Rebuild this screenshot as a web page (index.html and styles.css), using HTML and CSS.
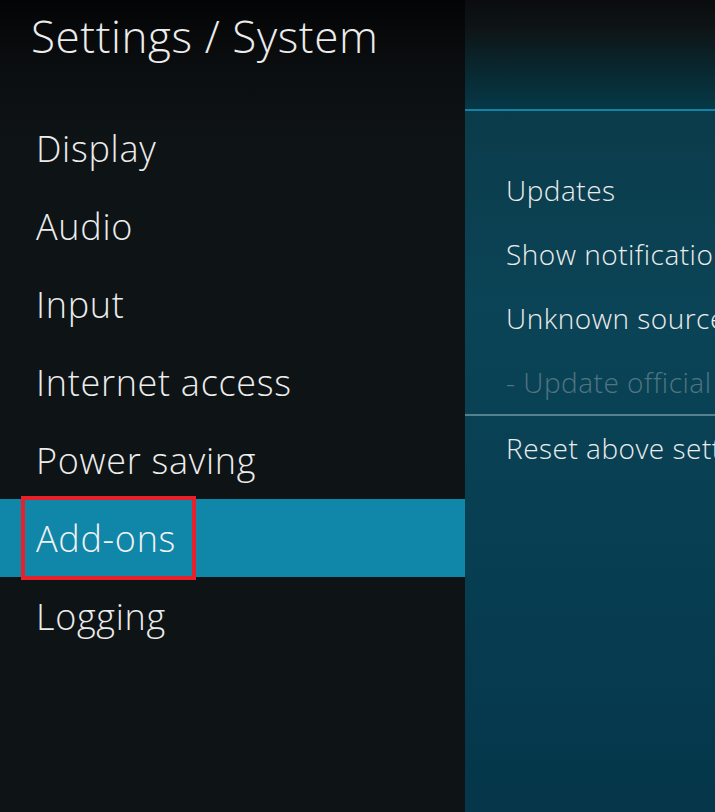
FILE: index.html
```html
<!DOCTYPE html>
<html>
<head>
<meta charset="utf-8">
<link rel="stylesheet" href="styles.css">
</head>
<body>
<div class="screen">
  <aside class="sidebar">
    <header class="title-bar"><h1 class="title">Settings / System</h1></header>
    <nav class="nav">
      <div class="nav-item">Display</div>
      <div class="nav-item">Audio</div>
      <div class="nav-item">Input</div>
      <div class="nav-item">Internet access</div>
      <div class="nav-item">Power saving</div>
      <div class="nav-item active">Add-ons<span class="mark"></span></div>
      <div class="nav-item">Logging</div>
    </nav>
  </aside>
  <main class="content">
    <div class="content-top"></div>
    <div class="content-rule"></div>
    <div class="settings">
      <div class="setting">Updates</div>
      <div class="setting">Show notifications</div>
      <div class="setting">Unknown sources</div>
      <div class="setting disabled">- Update official add-ons from</div>
      <div class="setting-sep"></div>
      <div class="setting">Reset above settings to default</div>
    </div>
  </main>
</div>
</body>
</html>
```
FILE: styles.css
```css
html, body {
  margin: 0;
  padding: 0;
  background: #0e1316;
}
body {
  width: 715px;
  height: 812px;
  overflow: hidden;
  font-family: "Open Sans", "Noto Sans", sans-serif;
  font-weight: 300;
  color: #ececec;
}
.screen {
  display: grid;
  grid-template-columns: 465px 1fr;
  height: 812px;
}
.sidebar {
  background: linear-gradient(180deg, #030405 0px, #0b0e10 70px, #0e1316 140px, #0e1316 100%);
  overflow: hidden;
}
.title-bar {
  height: 109px;
  box-sizing: border-box;
  padding-left: 31px;
}
.title {
  margin: 0;
  font-weight: 300;
  font-size: 44px;
  letter-spacing: 0.6px;
  line-height: 72px;
  color: #ececec;
  white-space: nowrap;
}
.nav {
  display: flex;
  flex-direction: column;
}
.nav-item {
  position: relative;
  height: 78px;
  display: flex;
  align-items: center;
  padding-left: 36px;
  font-size: 36px;
  letter-spacing: 0.7px;
  color: #ececec;
  white-space: nowrap;
}
.nav-item.active {
  background: #1086a8;
  color: #f2f2f2;
}
.mark {
  position: absolute;
  left: 21px;
  top: -3px;
  width: 175px;
  height: 84px;
  box-sizing: border-box;
  border: 4px solid #e8202a;
}
.content {
  background: linear-gradient(180deg, #0a3644 0px, #0b4456 300px, #073d51 600px, #05364a 100%);
  overflow: hidden;
  min-width: 0;
}
.content-top {
  height: 109px;
  background: linear-gradient(180deg, #0a0c0d 0px, #0e1517 30px, #082a33 75px, #063847 109px);
}
.content-rule {
  height: 2px;
  background: #1283a7;
}
.settings {
  padding-top: 47px;
  display: flex;
  flex-direction: column;
}
.setting {
  height: 64px;
  display: flex;
  align-items: center;
  padding-left: 41px;
  font-size: 28px;
  letter-spacing: 0.5px;
  color: #ececec;
  white-space: nowrap;
}
.setting.disabled {
  color: #4f7583;
}
.setting-sep {
  height: 2px;
  background: #55808f;
}
```
